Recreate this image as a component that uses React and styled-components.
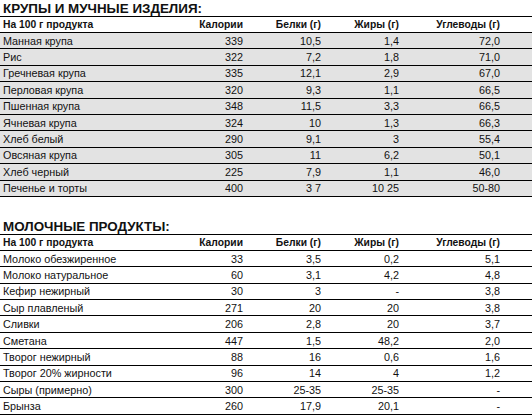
import React from "react";
import styled, { createGlobalStyle } from "styled-components";

const Global = createGlobalStyle`
  html, body {
    margin: 0;
    padding: 0;
    background: #fff;
  }
  body {
    font-family: "Liberation Sans", Arial, sans-serif;
    color: #111;
  }
`;

const Page = styled.div`
  width: 532px;
  overflow: hidden;
`;

const Section = styled.section`
  margin-top: ${p => (p.first ? "0" : "21px")};
`;

const Title = styled.h2`
  margin: 0;
  height: 17px;
  box-sizing: border-box;
  padding: 2px 0 0 3px;
  font-size: 13.4px;
  line-height: 14px;
  font-weight: bold;
  border-bottom: 1px solid #000;
  white-space: nowrap;
`;

const Row = styled.div`
  display: grid;
  grid-template-columns: 180px 63px 78px 78px 101px 32px;
  height: ${p => (p.head ? "16px" : "16.4px")};
  box-sizing: border-box;
  align-items: center;
  border-bottom: 1px solid #000;
  background: ${p => (p.shaded ? "#e3e3e3" : "#fff")};
  font-size: ${p => (p.head ? "10.3px" : "10.8px")};
  font-weight: ${p => (p.head ? "bold" : "normal")};
  white-space: nowrap;
`;

const Label = styled.div`
  padding-left: 3px;
`;

const Num = styled.div`
  text-align: right;
`;

const headers = ["На 100 г продукта", "Калории", "Белки (г)", "Жиры (г)", "Углеводы (г)"];

const grains = [
  ["Манная крупа", "339", "10,5", "1,4", "72,0"],
  ["Рис", "322", "7,2", "1,8", "71,0"],
  ["Гречневая крупа", "335", "12,1", "2,9", "67,0"],
  ["Перловая крупа", "320", "9,3", "1,1", "66,5"],
  ["Пшенная крупа", "348", "11,5", "3,3", "66,5"],
  ["Ячневая крупа", "324", "10", "1,3", "66,3"],
  ["Хлеб белый", "290", "9,1", "3", "55,4"],
  ["Овсяная крупа", "305", "11", "6,2", "50,1"],
  ["Хлеб черный", "225", "7,9", "1,1", "46,0"],
  ["Печенье и торты", "400", "3 7", "10 25", "50-80"],
];

const dairy = [
  ["Молоко обезжиренное", "33", "3,5", "0,2", "5,1"],
  ["Молоко натуральное", "60", "3,1", "4,2", "4,8"],
  ["Кефир нежирный", "30", "3", "-", "3,8"],
  ["Сыр плавленый", "271", "20", "20", "3,8"],
  ["Сливки", "206", "2,8", "20", "3,7"],
  ["Сметана", "447", "1,5", "48,2", "2,0"],
  ["Творог нежирный", "88", "16", "0,6", "1,6"],
  ["Творог 20% жирности", "96", "14", "4", "1,2"],
  ["Сыры (примерно)", "300", "25-35", "25-35", "-"],
  ["Брынза", "260", "17,9", "20,1", "-"],
];

const Cells = ({ cells }) => (
  <>
    <Label>{cells[0]}</Label>
    {cells.slice(1).map((c, i) => (
      <Num key={i}>{c}</Num>
    ))}
    <div />
  </>
);

const Table = ({ title, rows, shaded, first }) => (
  <Section first={first}>
    <Title>{title}</Title>
    <Row head>
      <Cells cells={headers} />
    </Row>
    {rows.map(r => (
      <Row key={r[0]} shaded={shaded}>
        <Cells cells={r} />
      </Row>
    ))}
  </Section>
);

export default function App() {
  return (
    <Page>
      <Global />
      <Table first title="КРУПЫ И МУЧНЫЕ ИЗДЕЛИЯ:" rows={grains} shaded />
      <Table title="МОЛОЧНЫЕ ПРОДУКТЫ:" rows={dairy} />
    </Page>
  );
}
